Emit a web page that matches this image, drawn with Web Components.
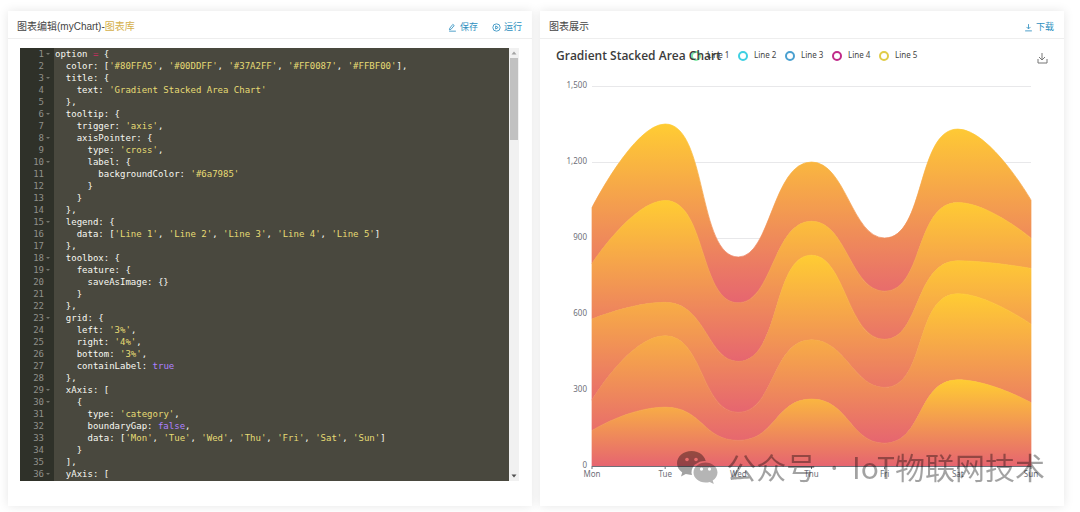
<!DOCTYPE html>
<html lang="zh">
<head>
<meta charset="utf-8">
<title>Gradient Stacked Area Chart</title>
<style>
  :root {
    --font-ui: "Liberation Sans", "Noto Sans CJK SC", sans-serif;
    --font-chart: "Noto Sans", "Noto Sans CJK SC", sans-serif;
    --font-title: "Open Sans", "Noto Sans CJK SC", sans-serif;
    --font-code: "DejaVu Sans Mono", monospace;
    --color-text: #444;
    --color-link: #2f8fc0;
    --color-accent: #d5b04c;
    --color-line: #eee;
  }
  body {
    margin: 0;
    background: #fff;
    color: var(--color-text);
    font-family: var(--font-ui);
  }
  em {
    font-style: normal;
    color: var(--color-accent);
  }
  water-mark span {
    padding: 0 6px;
    font-family: var(--font-chart);
  }
</style>
</head>
<body>
<chart-workbench>
  <panel-card>
    <span slot="title">图表编辑(myChart)-<em>图表库</em></span>
    <tool-button slot="actions" icon="edit">保存</tool-button>
    <tool-button slot="actions" icon="play">运行</tool-button>
    <code-editor></code-editor>
  </panel-card>
  <panel-card>
    <span slot="title">图表展示</span>
    <tool-button slot="actions" icon="download">下载</tool-button>
    <area-chart></area-chart>
    <water-mark slot="overlay">公众号<span> · </span>IoT物联网技术</water-mark>
  </panel-card>
</chart-workbench>

<script>
const ICONS = {
  edit: '<path d="M3 9.5 8.5 2.5 11 4.5 5.5 11 2.5 12zM2 14.500h12"/>',
  play: '<circle cx="8" cy="8" r="6.5"/><path d="M6.5 5.2v5.6L11 8z"/>',
  download: '<path d="M8 2v8M4.5 7 8 10.5 11.5 7M2 14h12"/>'
};

// Two columns of panels
class ChartWorkbench extends HTMLElement {
  constructor() {
    super();
    this.attachShadow({ mode: "open" }).innerHTML = `
      <style>
        :host {
          display: grid;
          grid-template-columns: 1fr 1fr;
          gap: 8px;
          padding: 11px 16px 6px 8px;
        }
      </style>
      <slot></slot>`;
  }
}

// White box with a header, a body and a layer over both
class PanelCard extends HTMLElement {
  constructor() {
    super();
    this.attachShadow({ mode: "open" }).innerHTML = `
      <style>
        :host {
          display: block;
          position: relative;
          min-width: 0;
          background: #fff;
          box-shadow: 0 0 10px rgba(0, 0, 0, 0.1);
        }
        header {
          display: flex;
          align-items: center;
          justify-content: space-between;
          height: 22px;
          padding: 5px 10px 0 9px;
          border-bottom: 1px solid var(--color-line);
          font-size: 10px;
          line-height: 16px;
        }
        .actions {
          display: flex;
          gap: 14px;
        }
        ::slotted(span) {
          white-space: nowrap;
        }
      </style>
      <header>
        <slot name="title"></slot>
        <div class="actions"><slot name="actions"></slot></div>
      </header>
      <slot></slot>
      <slot name="overlay"></slot>`;
  }
}

class ToolButton extends HTMLElement {
  constructor() {
    super();
    this.attachShadow({ mode: "open" });
  }
  connectedCallback() {
    this.shadowRoot.innerHTML = `
      <style>
        :host {
          display: block;
        }
        button {
          display: flex;
          align-items: center;
          gap: 3px;
          padding: 0;
          border: none;
          background: none;
          color: var(--color-link);
          font: 9px/16px var(--font-ui);
          cursor: pointer;
        }
        svg {
          width: 9px;
          height: 9px;
          fill: none;
          stroke: currentColor;
          stroke-width: 1.5;
        }
      </style>
      <button type="button">
        <svg viewBox="0 0 16 16" aria-hidden="true">${ICONS[this.getAttribute("icon")]}</svg>
        <slot></slot>
      </button>`;
  }
}

const SOURCE = `option = {
  color: ['#80FFA5', '#00DDFF', '#37A2FF', '#FF0087', '#FFBF00'],
  title: {
    text: 'Gradient Stacked Area Chart'
  },
  tooltip: {
    trigger: 'axis',
    axisPointer: {
      type: 'cross',
      label: {
        backgroundColor: '#6a7985'
      }
    }
  },
  legend: {
    data: ['Line 1', 'Line 2', 'Line 3', 'Line 4', 'Line 5']
  },
  toolbox: {
    feature: {
      saveAsImage: {}
    }
  },
  grid: {
    left: '3%',
    right: '4%',
    bottom: '3%',
    containLabel: true
  },
  xAxis: [
    {
      type: 'category',
      boundaryGap: false,
      data: ['Mon', 'Tue', 'Wed', 'Thu', 'Fri', 'Sat', 'Sun']
    }
  ],
  yAxis: [`;

class CodeEditor extends HTMLElement {
  constructor() {
    super();
    this.attachShadow({ mode: "open" });
  }
  highlight(line) {
    return line
      .replace(/'[^']*'/g, "<i>$&</i>")
      .replace(/\b(true|false)\b/g, "<b>$&</b>")
      .replace(" = ", " <u>=</u> ");
  }
  connectedCallback() {
    const lines = SOURCE.split("\n");
    const rows = lines.map((line, i) => {
      const fold = /[{[]$/.test(line) ? "fold" : "";
      return `<span class="num ${fold}">${i + 1}</span><code>${this.highlight(line)}</code>`;
    }).join("");

    this.shadowRoot.innerHTML = `
      <style>
        :host {
          display: flex;
          margin: 9px 13px 25px 12px;
          background: #49483e;
          font-family: var(--font-code);
          font-size: 9px;
          line-height: 12px;
        }
        .lines {
          flex: 1;
          min-width: 0;
          overflow: hidden;
          display: grid;
          grid-template-columns: 35px 1fr;
          grid-auto-rows: 12px;
          padding-bottom: 1px;
          background: linear-gradient(90deg, #2f3129 34px, #49483e 34px);
        }
        .num {
          position: relative;
          padding-right: 11px;
          text-align: right;
          color: #8f908a;
        }
        /* little arrow beside lines that open a block */
        .fold::after {
          content: "";
          position: absolute;
          right: 5px;
          top: 5px;
          border: 2px solid transparent;
          border-top-color: #77786f;
          border-bottom: 0;
        }
        code {
          font: inherit;
          white-space: pre;
          color: #f8f8f2;
        }
        i, b, u {
          font: inherit;
          text-decoration: none;
        }
        i { color: #e6db74; }
        b { color: #ae81ff; }
        u { color: #d02c62; }
        .scroll {
          display: flex;
          flex-direction: column;
          justify-content: space-between;
          align-items: center;
          width: 10px;
          background: #f1f1f1;
        }
        .scroll svg {
          width: 10px;
          height: 10px;
          fill: #505050;
        }
        .scroll svg:first-child {
          fill: #a3a3a3;
        }
        .thumb {
          width: 8px;
          height: 82px;
          margin-bottom: auto;
          background: #c1c1c1;
        }
      </style>
      <div class="lines">${rows}</div>
      <div class="scroll">
        <svg viewBox="0 0 10 10"><path d="M5 3.5 7.5 6.5h-5z"/></svg>
        <div class="thumb"></div>
        <svg viewBox="0 0 10 10"><path d="M5 6.5 7.5 3.5h-5z"/></svg>
      </div>`;
  }
}

const DAYS = ["Mon", "Tue", "Wed", "Thu", "Fri", "Sat", "Sun"];
const SERIES = [
  { name: "Line 1", color: "#80e8a5", data: [140, 232, 101, 264, 90, 340, 250] },
  { name: "Line 2", color: "#3fd0e2", data: [120, 282, 111, 234, 220, 340, 310] },
  { name: "Line 3", color: "#4aa0d0", data: [320, 132, 201, 334, 190, 130, 220] },
  { name: "Line 4", color: "#c02a8a", data: [220, 402, 231, 134, 190, 230, 120] },
  { name: "Line 5", color: "#e0cc48", data: [220, 302, 181, 234, 210, 290, 150] }
];
const MAX = 1500;

// Bezier segments through the points, control points kept between neighbours
function smooth(points) {
  const clamp = (v, a, b) => Math.max(Math.min(v, Math.max(a, b)), Math.min(a, b));
  const out = [];
  let c0 = points[0];
  for (let i = 1; i < points.length; i++) {
    const prev = points[i - 1];
    const p = points[i];
    const next = points[i + 1];
    let c1 = p;
    let nextC0 = p;
    if (next) {
      const lenPrev = Math.hypot(p[0] - prev[0], p[1] - prev[1]);
      const lenNext = Math.hypot(next[0] - p[0], next[1] - p[1]);
      const ratio = lenNext / (lenPrev + lenNext);
      nextC0 = p.map((v, k) => clamp(v + (next[k] - prev[k]) * 0.5 * ratio, next[k], v));
      c1 = p.map((v, k) => clamp(v - (nextC0[k] - v) * lenPrev / lenNext, prev[k], v));
      nextC0 = p.map((v, k) => v + (v - c1[k]) * lenNext / lenPrev);
    }
    out.push([prev, c0, c1, p]);
    c0 = nextC0;
  }
  return out;
}

class AreaChart extends HTMLElement {
  constructor() {
    super();
    this.attachShadow({ mode: "open" }).innerHTML = `
      <style>
        :host {
          display: block;
        }
        svg {
          display: block;
          width: 100%;
          height: 467px;
          font-family: var(--font-chart);
          font-size: 8px;
        }
        .title {
          font-family: var(--font-title);
          font-size: 12px;
          font-weight: 600;
          fill: #3c3c3c;
        }
        .legend text { fill: #444; }
        .legend circle {
          fill: #fff;
          stroke-width: 2;
        }
        .axis text { fill: #6e7079; }
        .axis line { stroke: #6e7079; }
        .grid { stroke: #e8e8ea; }
        .save {
          fill: none;
          stroke: #777;
        }
      </style>
      <svg role="img" aria-label="Gradient Stacked Area Chart"></svg>`;
  }
  connectedCallback() {
    this.render();
    this.observer = new ResizeObserver(() => this.render());
    this.observer.observe(this);
  }
  disconnectedCallback() {
    this.observer.disconnect();
  }
  render() {
    const width = this.clientWidth;
    const left = 52;
    const right = width - 33;
    const top = 47;
    const bottom = 427;
    const x = i => left + (right - left) * i / (DAYS.length - 1);
    const y = v => bottom - (bottom - top) * v / MAX;

    let base = DAYS.map(() => 0);
    let areas = "";
    for (const s of SERIES) {
      const sum = base.map((v, i) => v + s.data[i]);
      const upper = smooth(sum.map((v, i) => [x(i), y(v)]));
      const lower = smooth(base.map((v, i) => [x(i), y(v)])).reverse();
      // bands are painted bottom last, the thin stroke closes the seams
      areas = `<path fill="url(#heat)" stroke="url(#heat)" stroke-width=".7" d="M${upper[0][0]}`
        + upper.map(b => `C${b[1]} ${b[2]} ${b[3]}`).join("")
        + `L${lower[0][3]}`
        + lower.map(b => `C${b[2]} ${b[1]} ${b[0]}`).join("") + `Z"/>` + areas;
      base = sum;
    }

    let grid = "";
    let yLabels = "";
    for (let v = 0; v <= MAX; v += 300) {
      if (v) grid += `<line class="grid" x1="${left}" x2="${right}" y1="${y(v)}" y2="${y(v)}"/>`;
      yLabels += `<text x="${left - 5}" y="${y(v) + 2}" text-anchor="end">${v.toLocaleString("en-US")}</text>`;
    }
    const xLabels = DAYS.map((d, i) => `
      <line x1="${x(i)}" x2="${x(i)}" y1="${bottom}" y2="${bottom + 3}"/>
      <text x="${x(i)}" y="${bottom + 11}" text-anchor="middle">${d}</text>`).join("");

    const legend = SERIES.map((s, i) => {
      const cx = width / 2 - 106 + i * 47;
      return `<circle cx="${cx}" cy="17" r="4" stroke="${s.color}"/><text x="${cx + 11}" y="19">${s.name}</text>`;
    }).join("");

    this.shadowRoot.querySelector("svg").innerHTML = `
      <defs>
        <linearGradient id="heat" x1="0" y1="0" x2="0" y2="1">
          <stop offset="0" stop-color="#ffcc33"/>
          <stop offset="1" stop-color="#e66570"/>
        </linearGradient>
      </defs>
      <g shape-rendering="crispEdges">${grid}</g>
      ${areas}
      <g class="axis">
        <line x1="${left}" x2="${right}" y1="${bottom}" y2="${bottom}" shape-rendering="crispEdges"/>
        ${yLabels}${xLabels}
      </g>
      <g class="legend">${legend}</g>
      <text class="title" x="16" y="21">Gradient Stacked Area Chart</text>
      <path class="save" d="M${width - 26} 20v4h9v-4M${width - 22} 14v7m-3-3 3 3 3-3"/>`;
  }
}

// Account name laid over the lower edge of the chart
class WaterMark extends HTMLElement {
  constructor() {
    super();
    this.attachShadow({ mode: "open" }).innerHTML = `
      <style>
        :host {
          position: absolute;
          right: 19px;
          bottom: 18px;
          display: flex;
          align-items: center;
          gap: 8px;
          color: #000;
          opacity: 0.36;
          font: 30px/40px "Noto Sans CJK SC", sans-serif;
          white-space: pre;
          pointer-events: none;
        }
        svg {
          width: 41px;
          height: 33px;
        }
      </style>
      <svg viewBox="0 0 41 33" aria-hidden="true">
        <mask id="cut">
          <rect width="41" height="33" fill="#fff"/>
          <ellipse cx="28" cy="21.500" rx="13.500" ry="11.500" fill="#000"/>
          <circle cx="10" cy="8.500" r="1.800" fill="#000"/>
          <circle cx="19" cy="8.500" r="1.800" fill="#000"/>
        </mask>
        <path mask="url(#cut)" d="M14.500 0C6.500 0 0 5.400 0 12.200c0 3.800 2 7 5.200 9.200L4 25.500l4.800-2.400c1.800.5 3.700.8 5.700.8 8 0 14.500-5 14.500-11.700S22.500 0 14.500 0z"/>
        <path fill-rule="evenodd" opacity=".8" d="M28.500 11.500c-6.600 0-12 4.400-12 10s5.400 10 12 10c1.500 0 3-.2 4.300-.6l4 2.100-1.100-3.500c2.900-1.900 4.800-4.800 4.800-8 0-5.600-5.400-10-12-10zM24.500 16.500a1.600 1.600 0 1 1 0 3.200 1.600 1.600 0 0 1 0-3.200zM32.500 16.500a1.600 1.600 0 1 1 0 3.200 1.600 1.600 0 0 1 0-3.200z"/>
      </svg>
      <div><slot></slot></div>`;
  }
}

customElements.define("chart-workbench", ChartWorkbench);
customElements.define("panel-card", PanelCard);
customElements.define("tool-button", ToolButton);
customElements.define("code-editor", CodeEditor);
customElements.define("area-chart", AreaChart);
customElements.define("water-mark", WaterMark);
</script>
</body>
</html>
